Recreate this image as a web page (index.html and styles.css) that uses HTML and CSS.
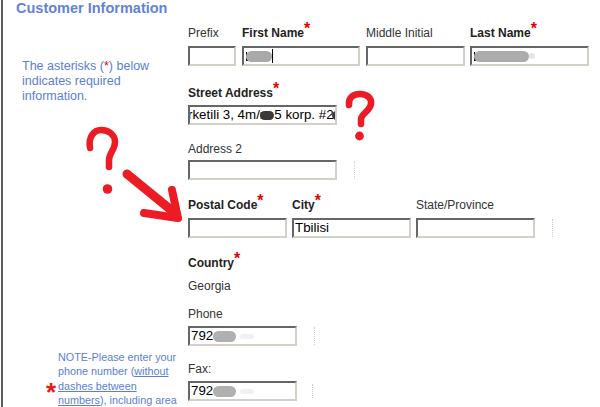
FILE: index.html
```html
<!DOCTYPE html>
<html>
<head>
<meta charset="utf-8">
<title>Customer Information</title>
<link rel="stylesheet" href="styles.css">
</head>
<body>
<div class="screen">
  <div class="page">
    <h1 class="title">Customer Information</h1>
    <div class="main">
      <aside class="side">
        <p class="note1">The asterisks (<span class="req-s">*</span>) below<br>indicates required<br>information.</p>
        <div class="note2">
          <span class="star">*</span>
          <p class="note2-text">NOTE-Please enter your<br>phone number (<a href="#">without<br>dashes between<br>numbers</a>), including area</p>
        </div>
      </aside>
      <section class="form">
        <div class="row r1">
          <div class="field">
            <span class="lbl">Prefix</span>
            <div class="box w-prefix"></div>
          </div>
          <div class="field gap6">
            <span class="lbl b">First Name<span class="ast">*</span></span>
            <div class="box w-first">
              <span class="stub"></span><span class="blob blob-first"></span><span class="caret"></span>
            </div>
          </div>
          <div class="field gap6">
            <span class="lbl">Middle Initial</span>
            <div class="box w-middle"></div>
          </div>
          <div class="field gap5">
            <span class="lbl b">Last Name<span class="ast">*</span></span>
            <div class="box w-last">
              <span class="stub"></span><span class="blob blob-last"></span><span class="blob-tail"></span>
            </div>
          </div>
        </div>

        <div class="row r2">
          <div class="field">
            <span class="lbl b">Street Address<span class="ast">*</span></span>
            <div class="box w-street">
              <span class="txt clipped">rketili 3, 4m/r</span><span class="blob dark dark1"></span><span class="txt">5 korp. #2</span><span class="blob dark dark2"></span>
            </div>
          </div>
        </div>

        <div class="row r3">
          <div class="field">
            <span class="lbl">Address 2</span>
            <div class="boxline">
              <div class="box w-street"></div>
              <span class="tick"></span>
            </div>
          </div>
        </div>

        <div class="row r4">
          <div class="field">
            <span class="lbl b">Postal Code<span class="ast">*</span></span>
            <div class="box w-postal"></div>
          </div>
          <div class="field gap5">
            <span class="lbl b">City<span class="ast">*</span></span>
            <div class="box w-city"><span class="txt">Tbilisi</span></div>
          </div>
          <div class="field gap5">
            <span class="lbl">State/Province</span>
            <div class="boxline">
              <div class="box w-city"></div>
              <span class="tick"></span>
            </div>
          </div>
        </div>

        <div class="row r5">
          <span class="lbl b">Country<span class="ast">*</span></span>
        </div>
        <div class="row r6">
          <span class="lbl">Georgia</span>
        </div>

        <div class="row r7">
          <div class="field">
            <span class="lbl">Phone</span>
            <div class="boxline">
              <div class="box w-phone"><span class="txt">792</span><span class="blob blob-phone"></span><span class="blob-faint"></span></div>
              <span class="tick"></span>
            </div>
          </div>
        </div>

        <div class="row r8">
          <div class="field">
            <span class="lbl">Fax:</span>
            <div class="boxline">
              <div class="box w-phone"><span class="txt">792</span><span class="blob blob-phone"></span><span class="blob-faint"></span></div>
              <span class="tick tick-fax"></span>
            </div>
          </div>
        </div>
      </section>
    </div>
  </div>

  <svg class="marks" width="600" height="407" viewBox="0 0 600 407" aria-hidden="true">
    <g fill="none" stroke="#ec1c24" stroke-linecap="round" stroke-linejoin="round">
      <path d="M90 148 C88 137 94 130 101 130 C109 130 115 135 115 142 C115 150 109 153 109 160 L109 167" stroke-width="6.5"/>
      <path d="M127 174 L176 214" stroke-width="9"/>
      <path d="M172 190 L178 218 L144 213" stroke-width="8"/>
      <path d="M349 105 C348 97 354 94 360 94 C367 94 372 98 371 104 C370 111 362 113 361 119 L361 124" stroke-width="6.5"/>
    </g>
    <g fill="#ec1c24">
      <circle cx="107.5" cy="189" r="4.8"/>
      <circle cx="359.5" cy="136" r="4.4"/>
    </g>
  </svg>
</div>
</body>
</html>
```

FILE: styles.css
```css
html, body {
  margin: 0;
  padding: 0;
  background: #ffffff;
  overflow: hidden;
}

.screen {
  position: relative;
  width: 600px;
  height: 407px;
  overflow: hidden;
  font-family: "Liberation Sans", Arial, sans-serif;
}

.page {
  margin-left: 1px;
  border-left: 2px solid #5a5a5a;
  height: 407px;
  box-sizing: border-box;
}

.title {
  margin: 0;
  padding-left: 13px;
  height: 16px;
  font-size: 14.5px;
  line-height: 16px;
  font-weight: bold;
  color: #6482d8;
}

.main {
  display: grid;
  grid-template-columns: 185px 1fr;
}

.side {
  display: flex;
  flex-direction: column;
}

.note1 {
  margin: 43px 0 0 19px;
  font-size: 12.5px;
  line-height: 15px;
  color: #5b7ed8;
  white-space: nowrap;
}

.req-s {
  color: #e00000;
}

.note2 {
  display: flex;
  margin: 246px 0 0 43px;
}

.star {
  display: block;
  flex: none;
  width: 12px;
  height: 26px;
  margin-top: 29px;
  font-size: 26px;
  line-height: 26px;
  font-weight: bold;
  color: #e51c1c;
}

.note2-text {
  margin: 0;
  font-size: 10.8px;
  line-height: 14.33px;
  color: #5b7ed8;
  white-space: nowrap;
}

.note2-text a {
  color: #5b7ed8;
  text-decoration: underline;
}

.form {
  display: flex;
  flex-direction: column;
  padding-top: 10px;
}

.row {
  display: flex;
}

.r2 { margin-top: 20px; }
.r3 { margin-top: 17px; }
.r4 { margin-top: 18px; }
.r5 { margin-top: 18px; }
.r6 { margin-top: 9px; }
.r7 { margin-top: 14px; }
.r8 { margin-top: 16px; }

.field {
  display: flex;
  flex-direction: column;
}

.gap6 { margin-left: 6px; }
.gap5 { margin-left: 5px; }

.lbl {
  display: block;
  height: 14px;
  line-height: 14px;
  font-size: 12px;
  color: #333333;
  white-space: nowrap;
}

.lbl.b {
  font-weight: bold;
  color: #222222;
}

.ast {
  color: #e80000;
  font-size: 16px;
  font-weight: bold;
  line-height: 0;
  vertical-align: 3px;
}

.box {
  flex: none;
  height: 20px;
  box-sizing: border-box;
  border: 2px solid;
  border-color: #666666 #d4d0c8 #d4d0c8 #666666;
  background: #ffffff;
  display: flex;
  align-items: center;
  overflow: hidden;
  padding-left: 1px;
  font-size: 13.33px;
  line-height: 16px;
  color: #000000;
  white-space: nowrap;
}

.r1 .box { margin-top: 6px; }
.r2 .box { margin-top: 5px; }
.r3 .boxline { margin-top: 4px; }
.r4 .box, .r4 .boxline { margin-top: 6px; }
.r4 .boxline .box { margin-top: 0; }
.r7 .boxline, .r8 .boxline { margin-top: 5px; }

.boxline {
  display: flex;
  align-items: center;
}

.w-prefix { width: 48px; }
.w-first { width: 118px; }
.w-middle { width: 99px; }
.w-last { width: 119px; }
.w-street { width: 149px; }
.w-postal { width: 99px; }
.w-city { width: 119px; }
.w-phone { width: 109px; }

.txt {
  flex: none;
}

.clipped {
  margin-left: -3px;
}

.stub {
  flex: none;
  width: 3px;
  height: 9px;
  border-left: 1px solid #000;
  border-bottom: 1px solid #000;
  box-sizing: border-box;
  margin-left: 1px;
}

.blob {
  flex: none;
  display: block;
  background: #a9a9a9;
  border-radius: 6px;
  filter: blur(0.7px);
}

.blob-first {
  width: 26px;
  height: 11px;
  margin-left: -3px;
}

.caret {
  flex: none;
  width: 1px;
  height: 14px;
  background: #000;
}

.blob-last {
  width: 55px;
  height: 11px;
  margin-left: -3px;
  background: #acacac;
}

.blob-tail {
  flex: none;
  width: 6px;
  height: 6px;
  border-radius: 3px;
  background: #e4e4e4;
}

.dark {
  background: #3a3a3a;
  height: 9px;
  border-radius: 5px;
}

.dark1 {
  width: 14px;
  margin-left: -4px;
}

.dark2 {
  width: 10px;
  margin-left: -2px;
}

.blob-phone {
  width: 23px;
  height: 11px;
  background: #b0b0b0;
}

.blob-faint {
  flex: none;
  width: 14px;
  height: 5px;
  margin-left: 4px;
  border-radius: 3px;
  background: #f0f0f0;
}

.tick {
  flex: none;
  width: 0;
  height: 18px;
  margin-left: 17px;
  border-left: 1px dotted #cfcfcf;
}

.tick-fax {
  margin-left: 15px;
  height: 14px;
}

.marks {
  position: absolute;
  left: 0;
  top: 0;
  pointer-events: none;
}
```
